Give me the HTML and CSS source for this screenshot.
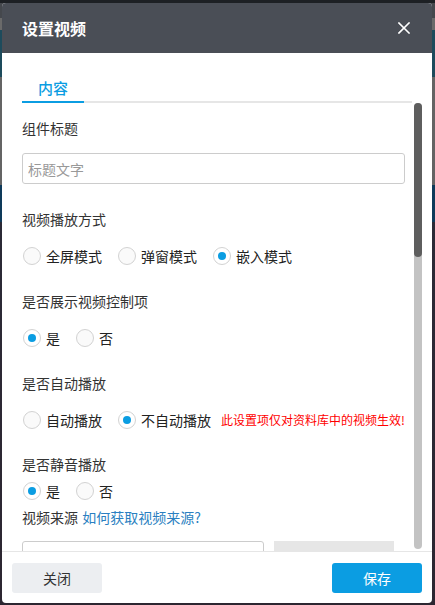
FILE: index.html
```html
<!DOCTYPE html>
<html lang="zh-CN">
<head>
<meta charset="utf-8">
<title>设置视频</title>
<link rel="stylesheet" href="styles.css">
</head>
<body>
<div class="modal">
  <div class="modal-header">
    <h2 class="modal-title">设置视频</h2>
    <button class="close-btn" aria-label="关闭">
      <svg width="12" height="12" viewBox="0 0 12 12"><path d="M1 1L11 11M11 1L1 11" stroke="#fff" stroke-width="1.6" fill="none" stroke-linecap="square"/></svg>
    </button>
  </div>
  <div class="modal-body">
    <div class="tabs">
      <div class="tab active">内容</div>
    </div>
    <div class="scroll-area">
      <div class="scroll">
        <div class="field first">
          <div class="field-label">组件标题</div>
          <input class="text-input" type="text" placeholder="标题文字">
        </div>
        <div class="field">
          <div class="field-label">视频播放方式</div>
          <div class="options">
            <label class="opt"><input type="radio" name="mode"><span>全屏模式</span></label>
            <label class="opt"><input type="radio" name="mode"><span>弹窗模式</span></label>
            <label class="opt"><input type="radio" name="mode" checked><span>嵌入模式</span></label>
          </div>
        </div>
        <div class="field">
          <div class="field-label">是否展示视频控制项</div>
          <div class="options">
            <label class="opt"><input type="radio" name="ctrl" checked><span>是</span></label>
            <label class="opt"><input type="radio" name="ctrl"><span>否</span></label>
          </div>
        </div>
        <div class="field">
          <div class="field-label">是否自动播放</div>
          <div class="options">
            <label class="opt"><input type="radio" name="auto"><span>自动播放</span></label>
            <label class="opt"><input type="radio" name="auto" checked><span>不自动播放</span></label>
            <span class="warn">此设置项仅对资料库中的视频生效!</span>
          </div>
        </div>
        <div class="field compact">
          <div class="field-label">是否静音播放</div>
          <div class="options">
            <label class="opt"><input type="radio" name="mute" checked><span>是</span></label>
            <label class="opt"><input type="radio" name="mute"><span>否</span></label>
          </div>
        </div>
        <div class="field source">
          <div class="field-label">视频来源 <a class="help-link" href="#">如何获取视频来源?</a></div>
          <div class="source-row">
            <input class="text-input source-input" type="text">
            <div class="source-btn"></div>
          </div>
        </div>
      </div>
      <div class="scrollbar"><div class="scrollbar-thumb"></div></div>
    </div>
  </div>
  <div class="modal-footer">
    <button class="btn btn-default">关闭</button>
    <button class="btn btn-primary">保存</button>
  </div>
</div>
</body>
</html>
```

FILE: styles.css
```css
* { box-sizing: border-box; }
html, body { height: 100%; }
body {
  margin: 0;
  font-family: "Noto Sans CJK SC", "Noto Sans", sans-serif;
  background: linear-gradient(to bottom,
    #1d2024 0, #1d2024 3px,
    #45484d 3px, #45484d 18px,
    #6a6a6a 18px, #6a6a6a 30px,
    #1d4b5c 30px, #1d4b5c 77px,
    #646464 77px, #646464 185px,
    #0e3a5a 185px, #0e3a5a 222px,
    #2b2a36 222px, #2c2631 100%);
  overflow: hidden;
}
.modal {
  margin: 3px 0 0 2px;
  width: 430px;
  height: 600px;
  background: #fff;
  border-radius: 4px;
  display: flex;
  flex-direction: column;
  overflow: hidden;
}
.modal-header {
  height: 50px;
  flex: none;
  background: #4a4e56;
  display: flex;
  align-items: center;
  justify-content: space-between;
  padding: 0 20px 0 20px;
}
.modal-title {
  margin: 0;
  font-size: 16px;
  font-weight: bold;
  color: #fff;
  line-height: 22px;
}
.close-btn {
  border: 0;
  background: none;
  padding: 0;
  width: 12px;
  height: 12px;
  display: flex;
  margin-right: 2px;
}
.modal-body {
  flex: 1;
  min-height: 0;
  display: flex;
  flex-direction: column;
  padding-top: 24px;
}
.tabs {
  margin: 0 20px;
  border-bottom: 2px solid #e6e6e6;
  display: flex;
  flex: none;
}
.tab {
  font-size: 15px;
  line-height: 22px;
  padding: 0 16px 2px;
  margin-bottom: -2px;
  color: #333;
}
.tab.active {
  color: #0b9de2;
  font-weight: 500;
  border-bottom: 2px solid #0b9de2;
}
.scroll-area {
  flex: 1;
  min-height: 0;
  margin: 0 10px 0 20px;
  display: flex;
}
.scroll {
  flex: 1;
  min-width: 0;
  overflow: hidden;
  padding: 15px 9px 0 0;
}
.scrollbar {
  flex: none;
  width: 8px;
  height: 446px;
  background: #c3c3c3;
  border-radius: 4px;
}
.scrollbar-thumb {
  height: 154px;
  background: #5e5e5e;
  border-radius: 4px;
}
.field { margin-top: 25px; }
.field.first { margin-top: 0; }
.field-label {
  font-size: 14px;
  line-height: 20px;
  color: #333;
}
.text-input {
  display: block;
  width: 100%;
  height: 31px;
  margin-top: 15px;
  border: 1px solid #cccccc;
  border-radius: 3px;
  padding: 0 5px;
  font: inherit;
  font-size: 14px;
  color: #333;
  outline: none;
}
.text-input::placeholder { color: #999; }
.options {
  margin-top: 17px;
  display: flex;
  align-items: center;
  height: 20px;
}
.opt {
  display: flex;
  align-items: center;
  margin-right: 15px;
  font-size: 14px;
  line-height: 20px;
  color: #222;
}
.opt input {
  appearance: none;
  -webkit-appearance: none;
  width: 18px;
  height: 18px;
  margin: 0 5px 0 1px;
  border: 1px solid #d2d2d2;
  border-radius: 50%;
  background: #fafafa;
  display: flex;
  align-items: center;
  justify-content: center;
}
.opt input:checked { background: #fff; }
.opt input:checked::after {
  content: "";
  width: 8px;
  height: 8px;
  border-radius: 50%;
  background: #0b9de2;
}
.warn {
  font-size: 12px;
  color: #ff0000;
  margin-left: -5px;
  line-height: 20px;
  white-space: nowrap;
}
.field.compact { margin-top: 24px; }
.field.compact .options { margin-top: 7px; }
.field.source { margin-top: 6px; }
.help-link {
  color: #2a7fc1;
  text-decoration: none;
  margin-left: 1px;
}
.source-row {
  margin-top: 14px;
  display: flex;
  gap: 10px;
  align-items: flex-start;
}
.source-input {
  margin-top: 0;
  width: 242px;
  height: 32px;
}
.source-btn {
  width: 120px;
  height: 32px;
  background: #e6e6e6;
}
.modal-footer {
  flex: none;
  border-top: 1px solid #e6e6e6;
  padding: 11px 10px 10px;
  display: flex;
  justify-content: space-between;
}
.btn {
  width: 90px;
  height: 30px;
  border: 0;
  border-radius: 3px;
  font-family: inherit;
  font-size: 14px;
  line-height: 30px;
  padding: 0;
}
.btn-default { background: #eceef1; color: #333; }
.btn-primary { background: #0b9de2; color: #fff; }
```
